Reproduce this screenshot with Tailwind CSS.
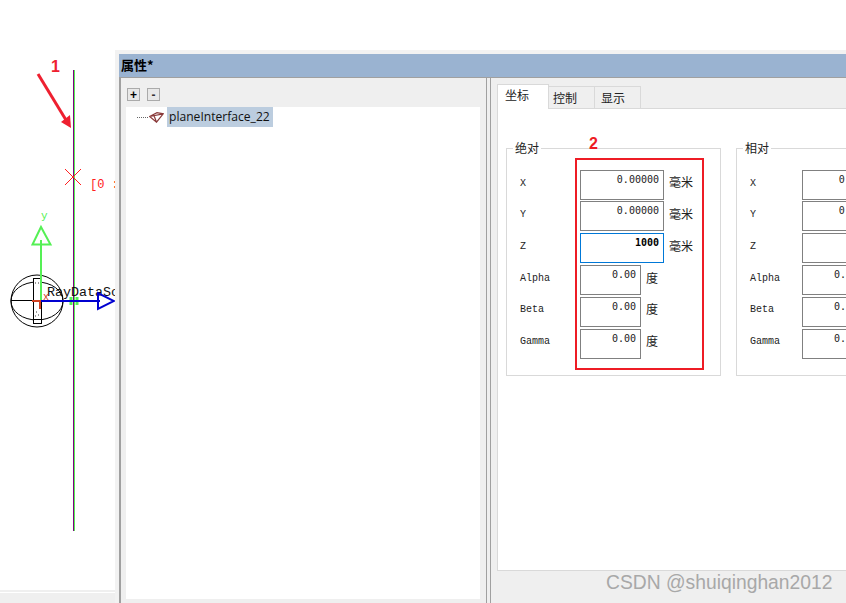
<!DOCTYPE html>
<html lang="en">
  <head>
    <meta charset="UTF-8" />
    <title>属性</title>
    <script src="https://cdn.jsdelivr.net/npm/@tailwindcss/browser@4"></script>
  </head>
  <body class="relative w-[846px] h-[603px] overflow-hidden bg-white flex flex-col font-['Noto_Sans_CJK_SC',sans-serif]">
    <div class="h-[50px] shrink-0"></div>
    <div class="flex h-[553px]">
      <!-- 3d view -->
      <div class="w-[115px] shrink-0 flex flex-col">
        <svg class="w-[115px] h-[540px] shrink-0" viewBox="0 50 115 540" font-family="Liberation Mono, monospace">
          <line x1="73.5" y1="70" x2="73.5" y2="531" stroke="#800080" />
          <line x1="74.5" y1="70" x2="74.5" y2="531" stroke="#55f055" />
          <path d="M65 169L81 185M81 169L65 185" stroke="#ff2020" fill="none" />
          <text x="90" y="188" font-size="12" fill="#ff2020">[0 :</text>
          <circle cx="37" cy="301" r="26" fill="none" stroke="#000" />
          <ellipse cx="37" cy="301" rx="26" ry="19" fill="none" stroke="#000" />
          <line x1="11" y1="300.5" x2="41" y2="300.5" stroke="#000" />
          <rect x="33.5" y="278.5" width="8" height="45" fill="#fff" stroke="#000" />
          <line x1="34" y1="319.5" x2="41" y2="319.5" stroke="#000" />
          <path d="M35 283h1M38 283h1M36 312h1M38 315h1M35 316h1" stroke="#333" />
          <text x="47" y="296" font-size="13.33" fill="#111">RayDataSo</text>
          <line x1="41" y1="240" x2="41" y2="300" stroke="#55f055" stroke-width="2" />
          <path d="M41 227L32.5 244.5H50.5Z" fill="none" stroke="#55f055" stroke-width="2" />
          <text x="41" y="219" font-size="11" fill="#55f055">y</text>
          <path d="M71 297V305M77 297V305" stroke="#55f055" stroke-width="3" />
          <line x1="41" y1="301" x2="100" y2="301" stroke="#0000d0" stroke-width="2" />
          <path d="M98 293V309L114 301Z" fill="none" stroke="#0000d0" stroke-width="2" />
          <path d="M32 301H40V309" fill="none" stroke="#d04020" stroke-width="2" />
          <text x="43" y="300" font-size="10" fill="#d04020">x</text>
          <path d="M38 74L66 120" stroke="#ee2030" stroke-width="3" fill="none" />
          <path d="M61 122L71 128L70 115Z" fill="#ee2030" />
          <text x="51" y="72" font-size="16" font-weight="700" font-family="Liberation Sans, sans-serif" fill="#ee2030">1</text>
        </svg>
        <div class="h-[2px] bg-[#efefef]"></div>
        <div class="h-px bg-white"></div>
        <div class="flex-1 bg-[#efefef]"></div>
      </div>
      <!-- window -->
      <div class="flex-1 flex flex-col border-l-[4px] border-t-[4px] border-[#f2f2f2] min-w-0">
        <div class="h-[23px] shrink-0 bg-[#9ab3d1] flex items-center pl-[2px] pb-[2px] text-[13px] font-bold text-black leading-none">属性*</div>
        <div class="flex-1 flex border-t border-[#a0a0a0] bg-[#efefef] min-h-0">
          <!-- tree -->
          <div class="w-[367px] shrink-0 border-l-2 border-[#a0a0a0] pl-[5px] pr-[6px] pb-[4px] flex flex-col">
            <div class="h-[29px] shrink-0 flex items-start pt-[10px] pl-px gap-[7px]">
              <button class="w-[13px] h-[13px] border border-[#aaa] bg-[#e8e8e8] flex items-center justify-center text-[12px] leading-none font-bold text-black font-['Liberation_Sans',sans-serif]">+</button>
              <button class="w-[13px] h-[13px] border border-[#aaa] bg-[#e8e8e8] flex items-center justify-center text-[12px] leading-none font-bold text-[#333] font-['Liberation_Sans',sans-serif]">-</button>
            </div>
            <div class="flex-1 bg-white">
              <div class="flex items-center h-5 pl-[11px]">
                <div class="w-[11px] border-t border-dotted border-[#666]"></div>
                <svg class="w-[15px] h-[11px] ml-px shrink-0" viewBox="0 0 15 11" fill="none" stroke="#8a3a3a" stroke-width="1.2">
                  <path d="M.6 4.5L8 .7L14.2 1.8L7.5 10.2ZM.6 4.5L14.2 1.8M5 3.5L7.5 10.2" />
                </svg>
                <div class="ml-[3px] h-5 pl-[2px] pr-[3px] bg-[#bccddf] text-[12.1px] leading-5 text-[#111] font-['Open_Sans',sans-serif] whitespace-nowrap">planeInterface_22</div>
              </div>
            </div>
          </div>
          <!-- splitter -->
          <div class="w-[5px] shrink-0 border-x border-[#a0a0a0]"></div>
          <!-- tabs -->
          <div class="flex-1 min-w-0 pl-[6px] pt-[6px] flex flex-col">
            <div class="h-[24px] shrink-0 flex items-end text-[12px] text-[#222]">
              <div class="relative z-10 w-[52px] h-[25px] -mb-px bg-white border border-b-0 border-[#d9d9d9] pl-[7px] leading-[20px]">坐标</div>
              <div class="w-[46px] h-[22px] border-t border-r border-[#d9d9d9] pl-[4px] leading-[21px]">控制</div>
              <div class="w-[46px] h-[22px] border-t border-r border-[#d9d9d9] pl-[6px] leading-[21px]">显示</div>
            </div>
            <div class="h-[463px] shrink-0 bg-white border border-r-0 border-[#d9d9d9] flex gap-[15px] pl-[8px] pt-[39px] overflow-hidden">
              <!-- 绝对 -->
              <fieldset class="relative w-[215px] h-[228px] shrink-0 border border-[#d9d9d9]">
                <legend class="absolute -top-[9px] left-[6px] px-[2px] bg-white text-[12px] leading-[16px] text-[#222]">绝对</legend>
                <div class="grid grid-rows-[31px_32px_32px_32px_32px_30px] pt-[21px] pl-[13px] items-start font-['Liberation_Mono',monospace] text-[10px] text-[#222]">
                  <div class="flex items-start"><span class="w-[60px] leading-[28px]">X</span><input readonly value="0.00000" class="w-[84px] h-[30px] border border-[#808080] pb-[12px] pr-1 text-right text-[10px] text-[#222] font-['DejaVu_Sans_Mono',monospace]" /><span class="ml-[5px] text-[12px] leading-[24px] font-['Noto_Sans_CJK_SC',sans-serif]">毫米</span></div>
                  <div class="flex items-start"><span class="w-[60px] leading-[28px]">Y</span><input readonly value="0.00000" class="w-[84px] h-[30px] border border-[#808080] pb-[12px] pr-1 text-right text-[10px] text-[#222] font-['DejaVu_Sans_Mono',monospace]" /><span class="ml-[5px] text-[12px] leading-[26px] font-['Noto_Sans_CJK_SC',sans-serif]">毫米</span></div>
                  <div class="flex items-start"><span class="w-[60px] leading-[28px]">Z</span><input readonly value="1000" class="w-[84px] h-[30px] border border-[#0078d7] pb-[12px] pr-1 text-right text-[10px] font-bold text-black font-['DejaVu_Sans_Mono',monospace]" /><span class="ml-[5px] text-[12px] leading-[26px] font-['Noto_Sans_CJK_SC',sans-serif]">毫米</span></div>
                  <div class="flex items-start"><span class="w-[60px] leading-[28px]">Alpha</span><input readonly value="0.00" class="w-[61px] h-[30px] border border-[#808080] pb-[12px] pr-1 text-right text-[10px] text-[#222] font-['DejaVu_Sans_Mono',monospace]" /><span class="ml-[5px] text-[12px] leading-[26px] font-['Noto_Sans_CJK_SC',sans-serif]">度</span></div>
                  <div class="flex items-start"><span class="w-[60px] leading-[26px]">Beta</span><input readonly value="0.00" class="w-[61px] h-[30px] border border-[#808080] pb-[12px] pr-1 text-right text-[10px] text-[#222] font-['DejaVu_Sans_Mono',monospace]" /><span class="ml-[5px] text-[12px] leading-[24px] font-['Noto_Sans_CJK_SC',sans-serif]">度</span></div>
                  <div class="flex items-start"><span class="w-[60px] leading-[26px]">Gamma</span><input readonly value="0.00" class="w-[61px] h-[30px] border border-[#808080] pb-[12px] pr-1 text-right text-[10px] text-[#222] font-['DejaVu_Sans_Mono',monospace]" /><span class="ml-[5px] text-[12px] leading-[24px] font-['Noto_Sans_CJK_SC',sans-serif]">度</span></div>
                </div>
              </fieldset>
              <!-- 相对 -->
              <fieldset class="relative w-[215px] h-[228px] shrink-0 border border-[#d9d9d9]">
                <legend class="absolute -top-[9px] left-[6px] px-[2px] bg-white text-[12px] leading-[16px] text-[#222]">相对</legend>
                <div class="grid grid-rows-[31px_32px_32px_32px_32px_30px] pt-[21px] pl-[13px] items-start font-['Liberation_Mono',monospace] text-[10px] text-[#222]">
                  <div class="flex items-start"><span class="w-[52px] leading-[28px]">X</span><input readonly value="0.00000" class="w-[84px] h-[30px] border border-[#808080] pb-[12px] pr-1 text-right text-[10px] text-[#222] font-['DejaVu_Sans_Mono',monospace]" /></div>
                  <div class="flex items-start"><span class="w-[52px] leading-[28px]">Y</span><input readonly value="0.00000" class="w-[84px] h-[30px] border border-[#808080] pb-[12px] pr-1 text-right text-[10px] text-[#222] font-['DejaVu_Sans_Mono',monospace]" /></div>
                  <div class="flex items-start"><span class="w-[52px] leading-[28px]">Z</span><input readonly value="" class="w-[84px] h-[30px] border border-[#808080] pb-[12px] pr-1 text-right text-[10px] text-[#222] font-['DejaVu_Sans_Mono',monospace]" /></div>
                  <div class="flex items-start"><span class="w-[52px] leading-[28px]">Alpha</span><input readonly value="0.00" class="w-[61px] h-[30px] border border-[#808080] pb-[12px] pr-1 text-right text-[10px] text-[#222] font-['DejaVu_Sans_Mono',monospace]" /></div>
                  <div class="flex items-start"><span class="w-[52px] leading-[26px]">Beta</span><input readonly value="0.00" class="w-[61px] h-[30px] border border-[#808080] pb-[12px] pr-1 text-right text-[10px] text-[#222] font-['DejaVu_Sans_Mono',monospace]" /></div>
                  <div class="flex items-start"><span class="w-[52px] leading-[26px]">Gamma</span><input readonly value="0.00" class="w-[61px] h-[30px] border border-[#808080] pb-[12px] pr-1 text-right text-[10px] text-[#222] font-['DejaVu_Sans_Mono',monospace]" /></div>
                </div>
              </fieldset>
            </div>
          </div>
        </div>
      </div>
    </div>
    <!-- annotation and watermark over the window -->
    <div class="absolute left-[575px] top-[158px] w-[129px] h-[212px] border-2 border-[#ee1c25]"></div>
    <div class="absolute left-[589px] top-[135px] text-[16px] leading-[18px] font-bold text-[#ee1c25] font-['Liberation_Sans',sans-serif]">2</div>
    <div class="absolute left-[606px] top-[572px] text-[19.3px] leading-[22px] text-[#a8a8a8] font-['Liberation_Sans',sans-serif] whitespace-nowrap">CSDN @shuiqinghan2012</div>
  </body>
</html>
